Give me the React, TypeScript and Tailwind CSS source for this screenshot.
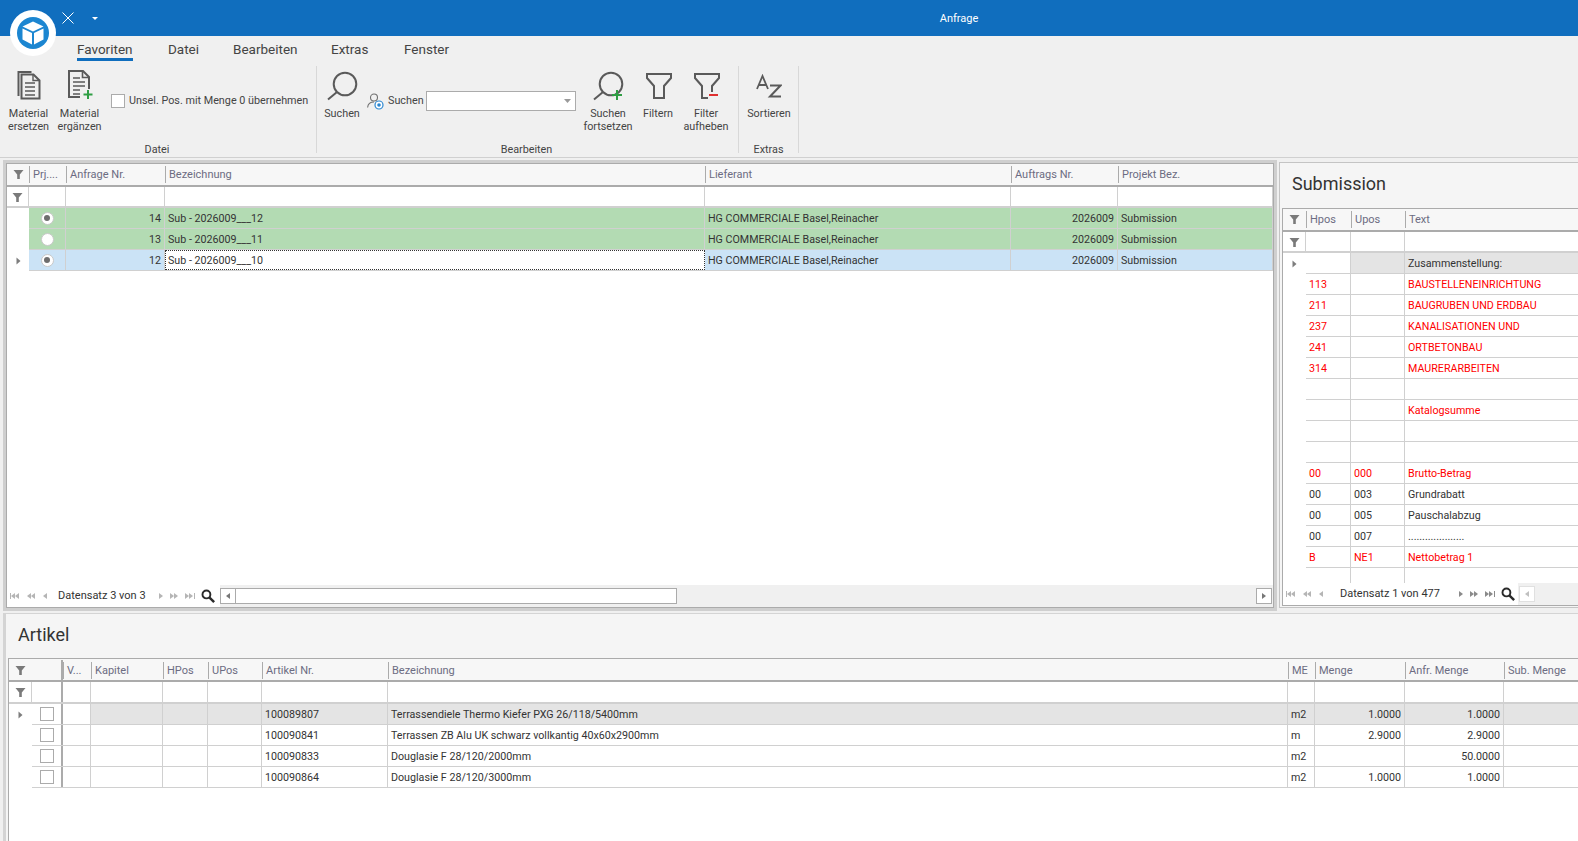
import type { ReactNode } from 'react';

const font = { fontFamily: 'Roboto, "Noto Sans", sans-serif' };

type Col = { w: string; label?: string; right?: boolean };

const iconStroke = '#5a5a5a';

function FunnelSmall() {
  return (
    <svg width="11" height="11" viewBox="0 0 11 11">
      <path d="M0.5 1h10L6.8 5.4V10H4.2V5.4z" fill="#7a7a7a" />
    </svg>
  );
}

function RowArrow() {
  return (
    <svg width="5" height="8" viewBox="0 0 5 8">
      <path d="M0.5 0.5 4.5 4 0.5 7.5z" fill="#7d7d7d" />
    </svg>
  );
}

function Radio({ on }: { on?: boolean }) {
  return (
    <span className="-mt-[2px] flex h-[13px] w-[13px] items-center justify-center rounded-full border border-[#c8c8c8] bg-white">
      {on && <span className="h-[6px] w-[6px] rounded-full bg-[#6e6e6e]" />}
    </span>
  );
}

function Check() {
  return <span className="block h-[14px] w-[14px] border border-[#ababab] bg-white" />;
}

function Cell({
  col,
  bg,
  children,
  className = '',
}: {
  col: Col;
  bg?: string;
  children?: ReactNode;
  className?: string;
}) {
  return (
    <div
      className={`flex h-full shrink-0 items-center overflow-hidden whitespace-nowrap border-r border-[#d0d0d0] px-[3px] pt-[2px] text-[10.7px] ${col.w} ${col.right ? 'justify-end' : ''} ${bg ?? ''} ${className}`}
    >
      {children}
    </div>
  );
}

function HeaderRow({ cols, thick, low }: { cols: Col[]; thick?: number; low?: boolean }) {
  return (
    <div className={`flex h-[23px] shrink-0 border-b-2 border-[#ababab] bg-[#f7f7f7] text-[#6c6c82] ${low ? 'pt-[1px]' : ''}`}>
      {cols.map((c, i) => (
        <div key={i} className={`flex h-full shrink-0 items-center overflow-hidden whitespace-nowrap px-[4px] ${c.w} ${i === thick ? 'border-r-2 border-[#ababab]' : ''}`}>
          {i === 0 ? (
            <span className="mx-auto">
              <FunnelSmall />
            </span>
          ) : (
            <span className="-ml-[4px] border-l border-[#ababab] pl-[3px] leading-[17px]">{c.label}</span>
          )}
        </div>
      ))}
    </div>
  );
}

function FilterRow({ cols, thick, low }: { cols: Col[]; thick?: number; low?: boolean }) {
  return (
    <div className={`flex shrink-0 border-b-2 border-[#d0d0d0] bg-white ${low ? 'h-[22px]' : 'h-[21px]'}`}>
      {cols.map((c, i) => (
        <div key={i} className={`flex h-full shrink-0 items-center justify-center pt-[1px] ${c.w} ${i === thick ? 'border-r-2 border-[#ababab]' : 'border-r border-[#d0d0d0]'}`}>
          {i === 0 && <FunnelSmall />}
        </div>
      ))}
    </div>
  );
}

function NavArrows({ dir, dim }: { dir: 'l' | 'r'; dim?: boolean }) {
  const c = dim ? '#b5b5b5' : '#8a8a8a';
  const tri = (x: number) =>
    dir === 'l' ? `M${x + 4} 1 ${x} 4 ${x + 4} 7z` : `M${x} 1 ${x + 4} 4 ${x} 7z`;
  const glyphs =
    dir === 'l'
      ? [
          <svg key="a" width="10" height="8"><rect x="0" y="1" width="1" height="6" fill={c} /><path d={tri(1)} fill={c} /><path d={tri(5)} fill={c} /></svg>,
          <svg key="b" width="9" height="8"><path d={tri(0)} fill={c} /><path d={tri(4)} fill={c} /></svg>,
          <svg key="c" width="5" height="8"><path d={tri(0)} fill={c} /></svg>,
        ]
      : [
          <svg key="c" width="5" height="8"><path d={tri(0)} fill={c} /></svg>,
          <svg key="b" width="9" height="8"><path d={tri(0)} fill={c} /><path d={tri(4)} fill={c} /></svg>,
          <svg key="a" width="10" height="8"><path d={tri(0)} fill={c} /><path d={tri(4)} fill={c} /><rect x="9" y="1" width="1" height="6" fill={c} /></svg>,
        ];
  return <div className={`flex shrink-0 items-center ${dir === 'l' ? 'gap-[7px]' : 'gap-[6px]'}`}>{glyphs}</div>;
}

function Magnifier() {
  return (
    <svg width="14" height="14" viewBox="0 0 16 16" fill="none" className="block">
      <circle cx="6.2" cy="6.2" r="4.5" stroke="#2a2a2a" strokeWidth="2.2" />
      <path d="M9.8 9.8 15 15" stroke="#2a2a2a" strokeWidth="2.8" />
    </svg>
  );
}

function Doc() {
  return (
    <g>
      <path d="M2 1h14l6 6v20H2z" fill="none" stroke={iconStroke} strokeWidth="2" />
      <path d="M15.5 1v6.5H22" fill="none" stroke={iconStroke} strokeWidth="1.6" />
      <path d="M6 8h7M6 12h12M6 16h12M6 20h12M6 24h8" stroke={iconStroke} strokeWidth="1.6" />
    </g>
  );
}

function MaterialSwapIcon() {
  return (
    <svg className="mb-[3px]" width="26" height="30" viewBox="0 0 26 30" fill="none">
      <path d="M2.5 26V2h13" stroke={iconStroke} strokeWidth="2" />
      <path d="M5.5 4.5h12l6 6v18h-18z" stroke={iconStroke} strokeWidth="2" />
      <path d="M17 4.5v6h6.5" stroke={iconStroke} strokeWidth="1.4" />
      <path d="M9 13h10M9 17h10M9 21h10M9 25h10" stroke={iconStroke} strokeWidth="1.6" />
    </svg>
  );
}

function MaterialAddIcon() {
  return (
    <svg className="mb-[3px] ml-[3px]" width="28" height="30" viewBox="0 0 28 30" fill="none">
      <Doc />
      <rect x="13" y="19" width="15" height="11" fill="#f0f0f0" />
      <path d="M21 20v9M16.5 24.5h9" stroke="#2f9e44" strokeWidth="2" />
    </svg>
  );
}

function SearchIcon({ plus }: { plus?: boolean }) {
  return (
    <svg width="32" height="32" viewBox="0 0 32 32" fill="none">
      <circle cx="19" cy="13" r="11.3" stroke={iconStroke} strokeWidth="2" />
      <path d="M11 21 2 28.5" stroke={iconStroke} strokeWidth="2" />
      {plus && <path d="M25 19v10M20 24h10" stroke="#2f9e44" strokeWidth="2" />}
    </svg>
  );
}

function FunnelIcon({ minus }: { minus?: boolean }) {
  return (
    <svg className="mb-[3px] ml-[3px]" width="28" height="28" viewBox="0 0 28 28" fill="none">
      {minus ? (
        <>
          <path d="M18 20v-6l7-8V2H1v4l7 8v12h6" stroke={iconStroke} strokeWidth="2" />
          <path d="M15 23h9" stroke="#e03131" strokeWidth="2" />
        </>
      ) : (
        <path d="M1 2h24v4l-7 8v12H8V14L1 6z" stroke={iconStroke} strokeWidth="2" />
      )}
    </svg>
  );
}

function SortIcon() {
  return (
    <svg className="mb-[5px]" width="26" height="24" viewBox="0 0 26 24" fill="none">
      <path d="M1 15 6.5 2 12 15M3 11h7" stroke={iconStroke} strokeWidth="1.8" />
      <path d="M14 11.5h10.5L14 22.5h11" stroke={iconStroke} strokeWidth="2" />
    </svg>
  );
}

function UserSearchIcon() {
  return (
    <svg className="shrink-0" width="17" height="17" viewBox="0 0 17 17" fill="none">
      <circle cx="7" cy="4.5" r="3.5" stroke="#707070" strokeWidth="1.1" />
      <path d="M0.6 14.5C1 10.5 4 9 7 9" stroke="#707070" strokeWidth="1.1" />
      <circle cx="12" cy="12" r="4" stroke="#2a86d0" strokeWidth="1.2" fill="#fff" />
      <circle cx="12" cy="12" r="1.8" fill="#2a86d0" />
    </svg>
  );
}

function RibbonButton({ icon, lines, w }: { icon: ReactNode; lines: string[]; w: string }) {
  return (
    <div className={`flex shrink-0 flex-col items-center ${w}`}>
      <div className="flex h-[37px] items-end justify-center">{icon}</div>
      <div className="mt-[4px] text-center leading-[13px]">
        {lines.map((l) => (
          <div key={l} className="whitespace-nowrap">
            {l}
          </div>
        ))}
      </div>
    </div>
  );
}

function RibbonGroup({ title, w, pad, children }: { title: string; w: string; pad?: string; children: ReactNode }) {
  return (
    <div className={`flex h-[87px] shrink-0 flex-col border-r border-[#d8d8d8] ${w}`}>
      <div className="flex flex-1 items-start">{children}</div>
      <div className={`-mb-[1px] text-center leading-[8px] text-[#444] ${pad ?? ''}`}>{title}</div>
    </div>
  );
}

function Ribbon() {
  return (
    <div className="flex h-[121px] shrink-0 flex-col bg-[#f0f0f0] text-[10.8px] text-[#444]">
      <div className="flex h-[30px] items-start pl-[77px] pt-[5px] text-[13.5px] text-[#444]">
        <div className="w-[91px]">
          <div className="w-fit border-b-[3px] border-[#106ebe] leading-[17px] text-[#444]">Favoriten</div>
        </div>
        <div className="w-[65px] leading-[17px]">Datei</div>
        <div className="w-[98px] leading-[17px]">Bearbeiten</div>
        <div className="w-[73px] leading-[17px]">Extras</div>
        <div className="leading-[17px]">Fenster</div>
      </div>
      <div className="flex">
        <RibbonGroup title="Datei" w="w-[317px]" pad="pr-[2px]">
          <RibbonButton w="w-[51px] ml-[3px]" icon={<MaterialSwapIcon />} lines={['Material', 'ersetzen']} />
          <RibbonButton w="w-[51px]" icon={<MaterialAddIcon />} lines={['Material', 'ergänzen']} />
          <label className="ml-[6px] mt-[27px] flex items-center gap-[4px] whitespace-nowrap">
            <span className="block h-[14px] w-[14px] border border-[#ababab] bg-white" />
            <span>Unsel. Pos. mit Menge 0 übernehmen</span>
          </label>
        </RibbonGroup>
        <RibbonGroup title="Bearbeiten" w="w-[422px]" pad="pr-[2px]">
          <RibbonButton w="w-[48px] ml-[1px]" icon={<SearchIcon />} lines={['Suchen']} />
          <div className="ml-[1px] mt-[25px] flex items-center">
            <UserSearchIcon />
            <span className="ml-[4px] w-[38px]">Suchen</span>
            <div className="flex h-[20px] w-[150px] items-center justify-end border border-[#ababab] bg-white pr-[4px]">
              <svg width="7" height="4"><path d="M0 0h7L3.5 4z" fill="#9a9a9a" /></svg>
            </div>
          </div>
          <RibbonButton w="w-[62px] ml-[1px]" icon={<SearchIcon plus />} lines={['Suchen', 'fortsetzen']} />
          <RibbonButton w="w-[38px]" icon={<FunnelIcon />} lines={['Filtern']} />
          <RibbonButton w="w-[58px]" icon={<FunnelIcon minus />} lines={['Filter', 'aufheben']} />
        </RibbonGroup>
        <RibbonGroup title="Extras" w="w-[60px]">
          <RibbonButton w="w-[60px]" icon={<SortIcon />} lines={['Sortieren']} />
        </RibbonGroup>
      </div>
    </div>
  );
}

function TitleBar() {
  return (
    <div className="relative flex h-[36px] shrink-0 items-center justify-center bg-[#106ebe] pl-[340px] pt-[2px] text-[11px] text-white">
      Anfrage
      <div className="absolute left-[10px] top-[10px] z-10 flex h-[46px] w-[46px] items-center justify-center rounded-full bg-white">
        <div className="flex h-[32px] w-[32px] items-center justify-center rounded-full bg-[#1c86d1]">
          <svg width="22" height="24" viewBox="0 0 22 24">
            <path d="M11 0.5 21.5 5.5 11 10.5 0.5 5.5z" fill="#fff" />
            <path d="M0.5 7.5 10 12v11.5L0.5 18.5z" fill="#fff" />
            <path d="M21.5 7.5 12 12v11.5l9.5-5z" fill="#fff" />
          </svg>
        </div>
      </div>
      <svg className="absolute left-[62px] top-[12px]" width="12" height="12" viewBox="0 0 12 12">
        <path d="M0.5 0.5l11 11M11.5 0.5l-11 11" stroke="#fff" strokeWidth="1" />
      </svg>
      <svg className="absolute left-[92px] top-[17px]" width="6" height="3">
        <path d="M0 0h6L3 3z" fill="#fff" />
      </svg>
    </div>
  );
}

const anfrageCols: Col[] = [
  { w: 'w-[22px]' },
  { w: 'w-[37px]', label: 'Prj....' },
  { w: 'w-[99px]', label: 'Anfrage Nr.', right: true },
  { w: 'w-[540px]', label: 'Bezeichnung' },
  { w: 'w-[306px]', label: 'Lieferant' },
  { w: 'w-[107px]', label: 'Auftrags Nr.', right: true },
  { w: 'w-[155px]', label: 'Projekt Bez.' },
];

const anfrageRows = [
  { nr: '14', name: 'Sub - 2026009___12', radio: true, bg: 'bg-[#b3dbb3]' },
  { nr: '13', name: 'Sub - 2026009___11', radio: false, bg: 'bg-[#b3dbb3]' },
  { nr: '12', name: 'Sub - 2026009___10', radio: true, bg: 'bg-[#cbe3f6]', active: true },
];

function AnfrageGrid() {
  return (
    <div className="ml-[3px] shrink-0 border-[3px] border-[#cfcfcf]">
      <div className="flex h-[445px] w-[1268px] flex-col overflow-hidden border border-[#ababab] bg-white text-[#333]">
        <HeaderRow cols={anfrageCols} />
        <FilterRow cols={anfrageCols} />
        <div className="flex-1">
          {anfrageRows.map((r) => (
            <div key={r.nr} className="flex h-[21px]">
              <div className="flex h-full w-[22px] shrink-0 items-center justify-center">{r.active && <RowArrow />}</div>
              <div className={`flex h-full flex-1 border-b border-[#d0d0d0] ${r.bg}`}>
                <Cell col={anfrageCols[1]} className="justify-center">
                  <Radio on={r.radio} />
                </Cell>
                <Cell col={anfrageCols[2]}>{r.nr}</Cell>
                {r.active ? (
                  <div className="flex h-full w-[540px] shrink-0 items-center border border-dotted border-[#333] bg-white px-[2px] pt-[2px] text-[10.7px]">{r.name}</div>
                ) : (
                  <Cell col={anfrageCols[3]}>{r.name}</Cell>
                )}
                <Cell col={anfrageCols[4]}>HG COMMERCIALE Basel,Reinacher</Cell>
                <Cell col={anfrageCols[5]}>2026009</Cell>
                <Cell col={anfrageCols[6]}>Submission</Cell>
              </div>
            </div>
          ))}
        </div>
        <div className="flex h-[22px] shrink-0 items-center">
          <div className="flex w-[213px] shrink-0 items-center pl-[3px]">
            <NavArrows dir="l" dim />
            <span className="ml-[10px] w-[101px] whitespace-nowrap pt-[1px] text-[#333]">Datensatz 3 von 3</span>
            <NavArrows dir="r" dim />
            <span className="ml-[6px]">
              <Magnifier />
            </span>
          </div>
          <div className="flex h-full flex-1 items-center bg-[#f0f0f0]">
            <div className="flex h-[16px] w-[16px] items-center justify-center border border-[#ababab] bg-white">
              <svg width="4" height="6"><path d="M4 0v6L0 3z" fill="#777" /></svg>
            </div>
            <div className="h-[16px] w-[441px] border-y border-r border-[#ababab] bg-white" />
            <div className="flex-1" />
            <div className="mr-[1px] flex h-[16px] w-[16px] items-center justify-center border border-[#ababab] bg-white">
              <svg width="4" height="6"><path d="M0 0v6L4 3z" fill="#777" /></svg>
            </div>
          </div>
        </div>
      </div>
    </div>
  );
}

const subCols: Col[] = [
  { w: 'w-[23px]' },
  { w: 'w-[45px]', label: 'Hpos' },
  { w: 'w-[54px]', label: 'Upos' },
  { w: 'w-[200px]', label: 'Text' },
];

const subRows = [
  { h: '', u: '', t: 'Zusammenstellung:', gray: true },
  { h: '113', u: '', t: 'BAUSTELLENEINRICHTUNG', red: true },
  { h: '211', u: '', t: 'BAUGRUBEN UND ERDBAU', red: true },
  { h: '237', u: '', t: 'KANALISATIONEN UND', red: true },
  { h: '241', u: '', t: 'ORTBETONBAU', red: true },
  { h: '314', u: '', t: 'MAURERARBEITEN', red: true },
  { h: '', u: '', t: '' },
  { h: '', u: '', t: 'Katalogsumme', red: true },
  { h: '', u: '', t: '' },
  { h: '', u: '', t: '' },
  { h: '00', u: '000', t: 'Brutto-Betrag', red: true },
  { h: '00', u: '003', t: 'Grundrabatt' },
  { h: '00', u: '005', t: 'Pauschalabzug' },
  { h: '00', u: '007', t: '....................' },
  { h: 'B', u: 'NE1', t: 'Nettobetrag 1', red: true },
  { h: '', u: '', t: '' },
];

function SubmissionPanel() {
  return (
    <div className="mt-[2px] flex h-[446px] min-w-0 flex-1 flex-col border-y border-l border-[#c4c4c4] bg-[#f5f5f5]">
      <div className="flex h-[45px] shrink-0 items-center pb-[4px] pl-[12px] text-[18px] text-[#333]">Submission</div>
      <div className="mb-[1px] ml-[2px] flex min-h-0 flex-1 flex-col overflow-hidden border-y border-l border-[#ababab] bg-white text-[#333]">
        <HeaderRow cols={subCols} />
        <FilterRow cols={subCols} />
        <div className="min-h-0 flex-1 overflow-hidden">
          {subRows.map((r, i) => {
            const color = r.red ? 'text-[#ff0000]' : '';
            return (
              <div key={i} className={`flex h-[21px] ${color}`}>
                <div className="flex h-full w-[23px] shrink-0 items-center justify-center">{i === 0 && <RowArrow />}</div>
                <div className="flex h-full flex-1 border-b border-[#d0d0d0]">
                  <Cell col={subCols[1]}>{r.h}</Cell>
                  <Cell col={subCols[2]} bg={r.gray ? 'bg-[#e4e4e4]' : ''}>{r.u}</Cell>
                  <Cell col={subCols[3]} bg={r.gray ? 'bg-[#e4e4e4]' : ''} className="border-r-0">{r.t}</Cell>
                </div>
              </div>
            );
          })}
        </div>
        <div className="flex h-[22px] shrink-0 items-center pl-[3px]">
          <NavArrows dir="l" dim />
          <span className="ml-[16px] w-[119px] whitespace-nowrap pt-[1px]">Datensatz 1 von 477</span>
          <NavArrows dir="r" />
          <span className="ml-[6px]">
            <Magnifier />
          </span>
          <div className="ml-[3px] flex h-full flex-1 items-center bg-[#f0f0f0] pl-[1px]">
            <div className="flex h-[16px] w-[16px] items-center justify-center border border-[#e0e0e0] bg-white">
              <svg width="4" height="6"><path d="M4 0v6L0 3z" fill="#c0c0c0" /></svg>
            </div>
          </div>
        </div>
      </div>
    </div>
  );
}

const artikelCols: Col[] = [
  { w: 'w-[23px]' },
  { w: 'w-[31px]' },
  { w: 'w-[28px]', label: 'V...' },
  { w: 'w-[72px]', label: 'Kapitel' },
  { w: 'w-[45px]', label: 'HPos' },
  { w: 'w-[54px]', label: 'UPos' },
  { w: 'w-[126px]', label: 'Artikel Nr.' },
  { w: 'w-[900px]', label: 'Bezeichnung' },
  { w: 'w-[27px]', label: 'ME' },
  { w: 'w-[90px]', label: 'Menge', right: true },
  { w: 'w-[99px]', label: 'Anfr. Menge', right: true },
  { w: 'w-[90px]', label: 'Sub. Menge', right: true },
];

const artikelRows = [
  { nr: '100089807', name: 'Terrassendiele Thermo Kiefer PXG 26/118/5400mm', me: 'm2', menge: '1.0000', anfr: '1.0000', current: true },
  { nr: '100090841', name: 'Terrassen ZB Alu UK schwarz vollkantig 40x60x2900mm', me: 'm', menge: '2.9000', anfr: '2.9000' },
  { nr: '100090833', name: 'Douglasie F 28/120/2000mm', me: 'm2', menge: '', anfr: '50.0000' },
  { nr: '100090864', name: 'Douglasie F 28/120/3000mm', me: 'm2', menge: '1.0000', anfr: '1.0000' },
];

function ArtikelPanel() {
  return (
    <div className="ml-[3px] mt-[2px] flex min-h-0 flex-1 flex-col border-l-[3px] border-t border-[#d4d4d4] bg-[#f5f5f5]">
      <div className="flex h-[44px] shrink-0 items-center pb-[4px] pl-[12px] text-[18px] text-[#333]">Artikel</div>
      <div className="ml-[2px] flex min-h-0 flex-1 flex-col overflow-hidden border-l border-t border-[#ababab] bg-white text-[#333]">
        <HeaderRow cols={artikelCols} thick={1} low />
        <FilterRow cols={artikelCols} thick={1} low />
        {artikelRows.map((r) => {
          const g = r.current ? 'bg-[#e4e4e4]' : '';
          return (
            <div key={r.nr} className="flex h-[21px] shrink-0">
              <div className="flex h-full w-[23px] shrink-0 items-center justify-center">{r.current && <RowArrow />}</div>
              <div className="flex h-full flex-1 border-b border-[#d0d0d0]">
                <div className="flex h-full w-[31px] shrink-0 items-center justify-center border-r-2 border-[#ababab]">
                  <Check />
                </div>
                <Cell col={artikelCols[2]} />
                <Cell col={artikelCols[3]} bg={g} />
                <Cell col={artikelCols[4]} bg={g} />
                <Cell col={artikelCols[5]} bg={g} />
                <Cell col={artikelCols[6]} bg={g}>{r.nr}</Cell>
                <Cell col={artikelCols[7]} bg={g}>{r.name}</Cell>
                <Cell col={artikelCols[8]} bg={g}>{r.me}</Cell>
                <Cell col={artikelCols[9]} bg={g}>{r.menge}</Cell>
                <Cell col={artikelCols[10]} bg={g}>{r.anfr}</Cell>
                <Cell col={artikelCols[11]} bg={g} />
              </div>
            </div>
          );
        })}
      </div>
    </div>
  );
}

export default function App() {
  return (
    <div className="flex h-[841px] w-[1578px] flex-col overflow-hidden bg-[#f0f0f0] text-[11px]" style={font}>
      <TitleBar />
      <Ribbon />
      <div className="flex gap-[2px] border-t border-[#d0d0d0] pt-[2px]">
        <AnfrageGrid />
        <SubmissionPanel />
      </div>
      <ArtikelPanel />
    </div>
  );
}
